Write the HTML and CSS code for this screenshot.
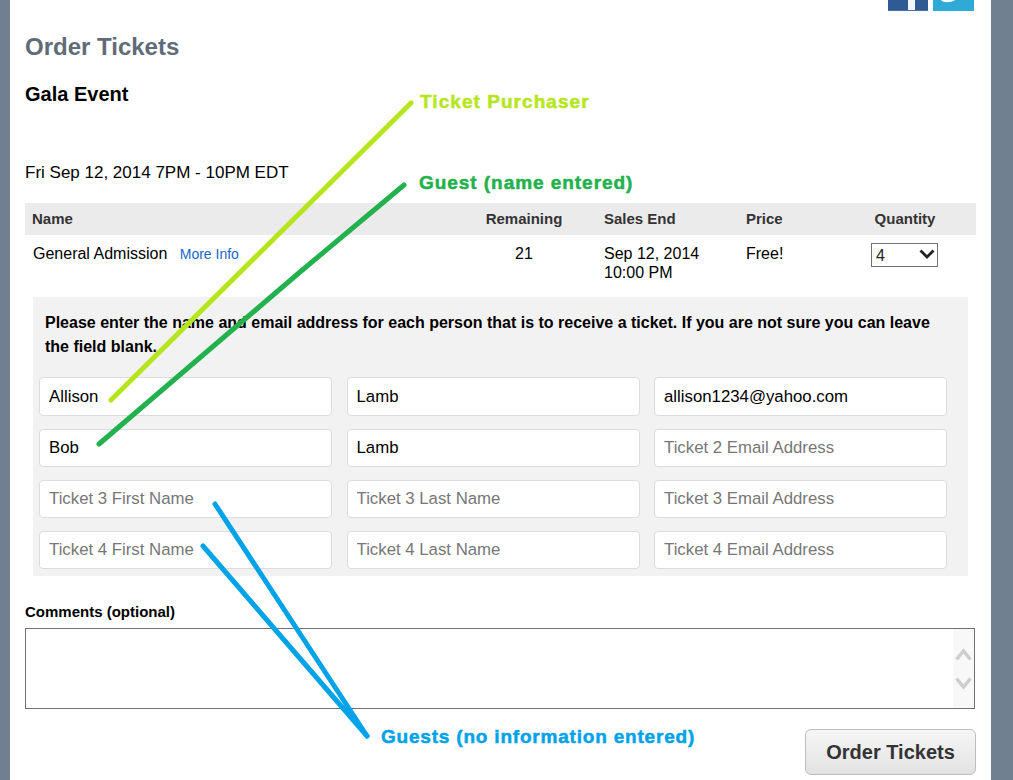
FILE: index.html
```html
<!DOCTYPE html>
<html lang="en">
<head>
    <meta charset="UTF-8">
    <meta name="viewport" content="width=device-width, initial-scale=1.0">
    <title>Order Tickets</title>
    <link rel="stylesheet" href="styles.css">
</head>
<body>
    <div class="container">
        <div class="social">
            <svg class="icon" width="40" height="11" viewBox="0 0 40 11">
                <rect width="40" height="11" fill="#2f5b94"/>
                <rect x="20" width="7" height="11" fill="#f2f5f9"/>
                <rect y="10" width="40" height="1" fill="#4a6f9e"/>
            </svg>
            <svg class="icon" width="41" height="11" viewBox="0 0 41 11">
                <rect width="41" height="11" fill="#2fa9d6"/>
                <path d="M8 0 C10 3 18 3 22 0 Z" fill="#fff"/>
            </svg>
        </div>

        <h1>Order Tickets</h1>
        <h2>Gala Event</h2>
        <p class="event-date">Fri Sep 12, 2014 7PM - 10PM EDT</p>

        <table class="tickets">
            <thead>
                <tr>
                    <th class="col-name">Name</th>
                    <th class="col-remaining">Remaining</th>
                    <th class="col-end">Sales End</th>
                    <th class="col-price">Price</th>
                    <th class="col-qty">Quantity</th>
                </tr>
            </thead>
            <tbody>
                <tr>
                    <td class="col-name">General Admission <a class="more-info" href="#">More Info</a></td>
                    <td class="col-remaining">21</td>
                    <td class="col-end">Sep 12, 2014<br>10:00 PM</td>
                    <td class="col-price">Free!</td>
                    <td class="col-qty">
                        <div class="select-wrap">
                            <select class="qty-select">
                                <option>4</option>
                            </select>
                            <svg class="select-arrow" width="16" height="10" viewBox="0 0 16 10">
                                <path d="M1.5 1.5 L8 8 L14.5 1.5" fill="none" stroke="#222" stroke-width="2.8"/>
                            </svg>
                        </div>
                    </td>
                </tr>
            </tbody>
        </table>

        <div class="guests">
            <p class="guests-note">Please enter the name and email address for each person that is to receive a ticket. If you are not sure you can leave the field blank.</p>
            <div class="guest-grid">
                <input type="text" value="Allison" placeholder="Ticket 1 First Name">
                <input type="text" value="Lamb" placeholder="Ticket 1 Last Name">
                <input type="text" value="allison1234@yahoo.com" placeholder="Ticket 1 Email Address">
                <input type="text" value="Bob" placeholder="Ticket 2 First Name">
                <input type="text" value="Lamb" placeholder="Ticket 2 Last Name">
                <input type="text" placeholder="Ticket 2 Email Address">
                <input type="text" placeholder="Ticket 3 First Name">
                <input type="text" placeholder="Ticket 3 Last Name">
                <input type="text" placeholder="Ticket 3 Email Address">
                <input type="text" placeholder="Ticket 4 First Name">
                <input type="text" placeholder="Ticket 4 Last Name">
                <input type="text" placeholder="Ticket 4 Email Address">
            </div>
        </div>

        <label class="comments-label" for="comments">Comments (optional)</label>
        <div class="comments">
            <textarea id="comments"></textarea>
            <div class="scrollbar">
                <svg width="17" height="13" viewBox="0 0 17 13"><path d="M1.5 11.5 L8.5 3 L15.5 11.5" fill="none" stroke="#cdcdcd" stroke-width="3.4"/></svg>
                <svg width="17" height="13" viewBox="0 0 17 13"><path d="M1.5 1.5 L8.5 10 L15.5 1.5" fill="none" stroke="#cdcdcd" stroke-width="3.4"/></svg>
            </div>
        </div>

        <div class="actions">
            <button class="order-btn">Order Tickets</button>
        </div>
    </div>

    <!-- Notas desenhadas por cima da captura -->
    <svg class="scribbles" width="1013" height="780" viewBox="0 0 1013 780">
        <g fill="none" stroke-width="5" stroke-linecap="round">
            <path d="M411 103 L111 400" stroke="#b5e61d"/>
            <path d="M404 185 L300 272 L99 444" stroke="#22b14c"/>
            <path d="M215 504 L367 736" stroke="#00a2e8"/>
            <path d="M203 546 L367 736" stroke="#00a2e8"/>
        </g>
    </svg>
    <span class="note note-purchaser">Ticket Purchaser</span>
    <span class="note note-guest">Guest (name entered)</span>
    <span class="note note-empty">Guests (no information entered)</span>
</body>
</html>
```

FILE: styles.css
```css
html, body {
    height: 780px;
    overflow: hidden;
}
body {
    font-family: "Liberation Sans", Arial, sans-serif;
    background-color: #708090;
    margin: 0;
    position: relative;
    color: #000;
}
.container {
    width: 951px;
    margin-left: 10px;
    background-color: #fff;
    padding: 0 15px;
    height: 780px;
}
.social {
    display: flex;
    justify-content: flex-end;
    gap: 5px;
    height: 11px;
    padding-right: 2px;
}
.icon {
    display: block;
}
h1 {
    font-size: 24px;
    line-height: 28px;
    font-weight: bold;
    color: #5f6b78;
    margin: 22px 0 0;
}
h2 {
    font-size: 20px;
    line-height: 24px;
    font-weight: bold;
    margin: 21px 0 0;
}
.event-date {
    font-size: 17px;
    line-height: 20px;
    margin: 57px 0 0;
}
.tickets {
    width: 951px;
    border-collapse: collapse;
    table-layout: fixed;
    margin-top: 20px;
    font-size: 16px;
}
.tickets th {
    background-color: #ebebeb;
    color: #333;
    font-size: 15px;
    height: 30px;
    padding: 0 0 2px;
    text-align: left;
}
.tickets td {
    height: 62px;
    padding: 9px 0 0;
    vertical-align: top;
    line-height: 19px;
    box-sizing: border-box;
}
.tickets .col-name {
    width: 411px;
    padding-left: 8px;
}
.tickets th.col-name {
    width: 412px;
    padding-left: 7px;
}
.tickets .col-remaining {
    width: 160px;
    text-align: center;
}
.col-end {
    width: 142px;
}
.col-price {
    width: 104px;
}
.tickets th.col-qty {
    text-align: center;
    padding-right: 16px;
}
.more-info {
    color: #1a66c9;
    font-size: 14px;
    text-decoration: none;
    margin-left: 8px;
}
.select-wrap {
    position: relative;
    width: 67px;
    height: 24px;
    margin: -1px 0 0 21px;
}
.qty-select {
    appearance: none;
    width: 67px;
    height: 24px;
    border: 1px solid #707070;
    background: #fff;
    font-family: inherit;
    font-size: 16px;
    padding: 0 0 0 4px;
    border-radius: 0;
    color: #222;
}
.select-arrow {
    position: absolute;
    right: 3px;
    top: 6px;
}
.guests {
    margin-left: 8px;
    width: 935px;
    height: 279px;
    box-sizing: border-box;
    background-color: #f2f2f2;
    padding-top: 14px;
}
.guests-note {
    font-size: 16px;
    font-weight: bold;
    line-height: 24px;
    margin: 0 20px 0 12px;
}
.guest-grid {
    display: grid;
    grid-template-columns: repeat(3, 293px);
    column-gap: 14.5px;
    row-gap: 13px;
    margin: 18px 0 0 6px;
}
.guest-grid input {
    height: 38px;
    box-sizing: border-box;
    width: 100%;
    border: 1.5px solid #dcdcdc;
    border-radius: 4px;
    background: #fff;
    font-family: inherit;
    font-size: 16.8px;
    color: #000;
    padding: 0 8px 0 9px;
    outline: none;
}
.guest-grid input:nth-child(-n+3) {
    height: 39px;
}
.guest-grid input::placeholder {
    color: #777;
    opacity: 1;
}
.comments-label {
    display: block;
    font-size: 15px;
    font-weight: bold;
    line-height: 18px;
    margin-top: 27px;
}
.comments {
    position: relative;
    width: 950px;
    height: 81px;
    margin-top: 7px;
    box-sizing: border-box;
    border: 1px solid #707070;
    display: flex;
}
.comments textarea {
    flex: 1;
    border: none;
    outline: none;
    resize: none;
    padding: 4px;
    font-family: inherit;
    font-size: 16px;
}
.scrollbar {
    width: 21px;
    background-color: #f8f8f8;
    display: flex;
    flex-direction: column;
    align-items: center;
    gap: 16px;
    padding-top: 19px;
    box-sizing: border-box;
}
.actions {
    display: flex;
    justify-content: flex-end;
    margin-top: 20px;
}
.order-btn {
    width: 171px;
    height: 46px;
    border: 1px solid #bdbdbd;
    border-radius: 6px;
    background: linear-gradient(#f6f6f6, #e2e2e2);
    font-family: inherit;
    font-size: 20px;
    font-weight: bold;
    color: #333;
    padding: 0;
}
/* Notas por cima da pagina */
.scribbles {
    position: absolute;
    left: 0;
    top: 0;
    pointer-events: none;
}
.note {
    position: absolute;
    font-size: 19px;
    line-height: 22px;
    font-weight: bold;
    -webkit-text-stroke: 0.5px currentColor;
    white-space: nowrap;
}
.note-purchaser {
    left: 420px;
    top: 91px;
    color: #b5e61d;
    letter-spacing: 1.05px;
}
.note-guest {
    left: 419px;
    top: 172px;
    color: #22b14c;
    letter-spacing: 0.95px;
}
.note-empty {
    left: 381px;
    top: 726px;
    color: #00a2e8;
    letter-spacing: 0.8px;
}
```
